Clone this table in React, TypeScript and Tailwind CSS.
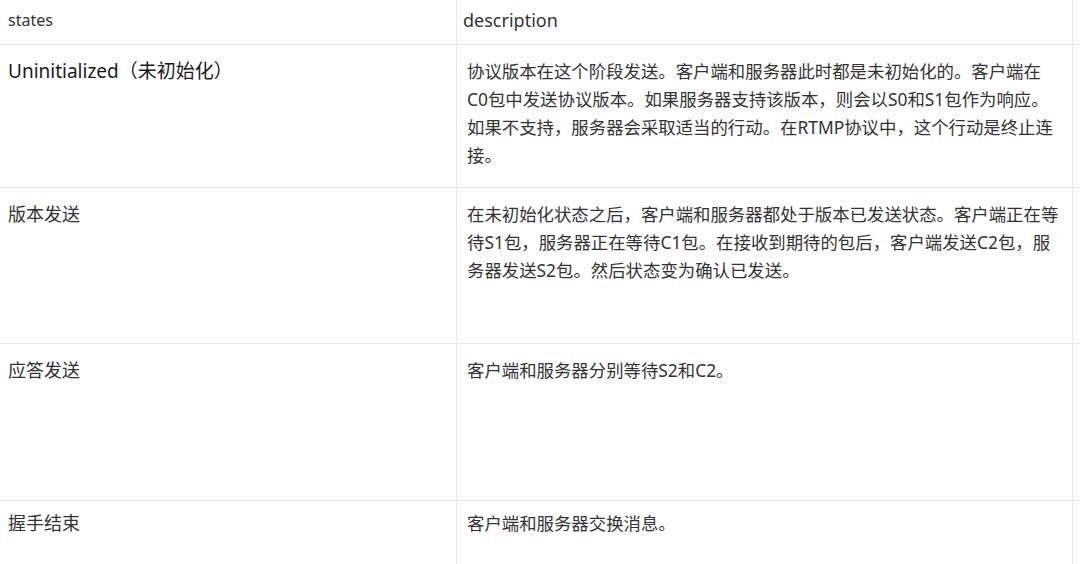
const rows: { state: string; big?: boolean; h: string; pt: string; lines: string[] }[] = [
  {
    state: 'Uninitialized（未初始化）',
    big: true,
    h: 'h-[143px]',
    pt: 'pt-3',
    lines: [
      '协议版本在这个阶段发送。客户端和服务器此时都是未初始化的。客户端在',
      'C0包中发送协议版本。如果服务器支持该版本，则会以S0和S1包作为响应。',
      '如果不支持，服务器会采取适当的行动。在RTMP协议中，这个行动是终止连',
      '接。',
    ],
  },
  {
    state: '版本发送',
    h: 'h-[156px]',
    pt: 'pt-3',
    lines: [
      '在未初始化状态之后，客户端和服务器都处于版本已发送状态。客户端正在等',
      '待S1包，服务器正在等待C1包。在接收到期待的包后，客户端发送C2包，服',
      '务器发送S2包。然后状态变为确认已发送。',
    ],
  },
  {
    state: '应答发送',
    h: 'h-[157px]',
    pt: 'pt-3',
    lines: ['客户端和服务器分别等待S2和C2。'],
  },
  {
    state: '握手结束',
    h: 'h-[80px]',
    pt: 'pt-2',
    lines: ['客户端和服务器交换消息。'],
  },
]

export default function App() {
  return (
    <div className="h-[564px] w-[1080px] overflow-hidden bg-white text-[#333] [font-family:'Noto_Sans','Noto_Sans_CJK_SC',sans-serif]">
      {/* header */}
      <div className="flex h-[45px] border-b border-[#e8e8e8]">
        <div className="flex w-[457px] shrink-0 items-center border-r border-[#e8e8e8] pb-1 pl-2 text-[16px]">
          states
        </div>
        <div className="flex w-[616px] shrink-0 items-center border-r border-[#e8e8e8] pb-1 pl-[6px] text-[18px]">
          description
        </div>
        <div className="flex-1" />
      </div>

      {rows.map((r, i) => (
        <div
          key={r.state}
          className={`flex ${r.h} ${i < rows.length - 1 ? 'border-b border-[#e8e8e8]' : ''}`}
        >
          <div
            className={`w-[457px] shrink-0 border-r border-[#e8e8e8] pl-2 leading-7 ${r.pt} ${
              r.big ? 'text-[19px] text-[#1a1a1a]' : 'text-[18px]'
            }`}
          >
            {r.state}
          </div>
          <div
            className={`w-[616px] shrink-0 border-r border-[#e8e8e8] pl-[10px] text-[17.4px] leading-7 ${r.pt}`}
          >
            {r.lines.map((l) => (
              <div key={l} className="whitespace-nowrap">
                {l}
              </div>
            ))}
          </div>
          <div className="flex-1" />
        </div>
      ))}
    </div>
  )
}
